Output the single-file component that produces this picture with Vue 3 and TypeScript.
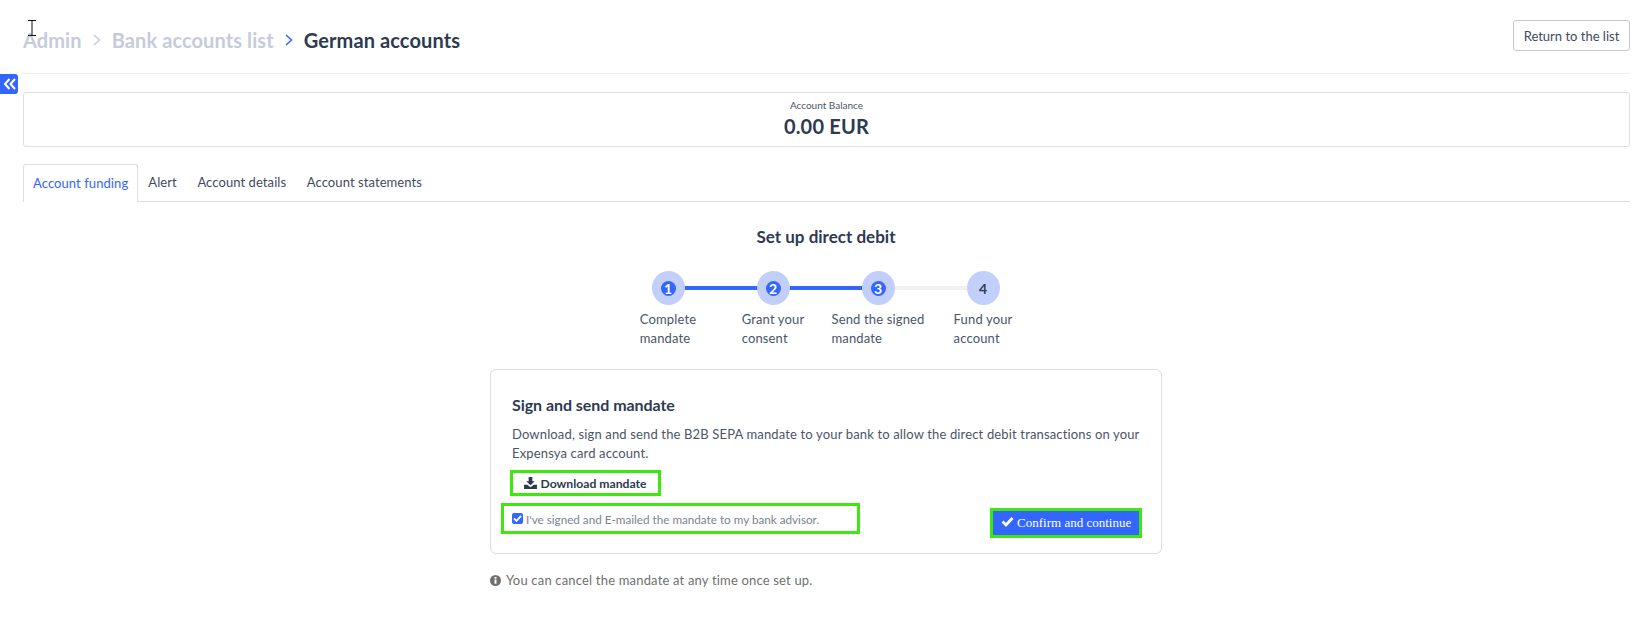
<script setup lang="ts">
const tabs: string[] = ['Alert', 'Account details', 'Account statements']
const steps = [
  { n: '1', label: ['Complete', 'mandate'], done: true },
  { n: '2', label: ['Grant your', 'consent'], done: true },
  { n: '3', label: ['Send the signed', 'mandate'], done: true },
  { n: '4', label: ['Fund your', 'account'], done: false },
]
</script>

<template>
  <div class="page">
    <svg class="ibeam" width="8" height="16" viewBox="0 0 8 16" aria-hidden="true">
      <path d="M0 .5h3M5 .5h3M4 1v14M0 15.5h3M5 15.5h3M3 .5h2M3 15.5h2" stroke="#111" stroke-width="1" fill="none" />
    </svg>
    <button class="collapse" aria-label="Collapse">
      <svg width="14" height="14" viewBox="0 0 14 14"><path d="M6.5 2 2 7l4.500 5M12 2 7.500 7l4.500 5" fill="none" stroke="#fff" stroke-width="2" /></svg>
    </button>

    <header class="top">
      <nav class="crumbs">
        <span class="muted">Admin</span>
        <svg class="chev" width="8" height="12" viewBox="0 0 8 12"><path d="m1 1 5.500 5L1 11" fill="none" stroke="#c6cbdc" stroke-width="1.500" /></svg>
        <span class="muted">Bank accounts list</span>
        <svg class="chev" width="8" height="12" viewBox="0 0 8 12"><path d="m1 1 5.500 5L1 11" fill="none" stroke="#3366ff" stroke-width="1.500" /></svg>
        <span class="current">German accounts</span>
      </nav>
      <button class="return">Return to the list</button>
    </header>

    <section class="balance">
      <div class="bal-label">Account Balance</div>
      <div class="bal-value">0.00 EUR</div>
    </section>

    <div class="tabs">
      <div class="tab active">Account funding</div>
      <div v-for="t in tabs" :key="t" class="tab">{{ t }}</div>
    </div>

    <main class="content">
      <h2 class="title">Set up direct debit</h2>

      <div class="steps">
        <div v-for="(s, i) in steps" :key="s.n" class="step">
          <span class="dot">
            <span class="num" :class="{ done: s.done }">{{ s.n }}</span>
          </span>
          <span v-if="i < 3" class="bar" :class="{ on: i < 2 }"></span>
          <div class="step-label"><div v-for="l in s.label" :key="l">{{ l }}</div></div>
        </div>
      </div>

      <section class="card">
        <h3>Sign and send mandate</h3>
        <p>Download, sign and send the B2B SEPA mandate to your bank to allow the direct debit transactions on your Expensya card account.</p>
        <button class="download">
          <svg width="13" height="12" viewBox="0 0 14 13"><path d="M5 0h4v4.500h2.600L7 9 2.400 4.500H5z" fill="#2d3a52" /><path d="M0 8.500h3.500L7 11l3.500-2.500H14V13H0z" fill="#2d3a52" /></svg>
          Download mandate
        </button>
        <div class="bottom">
          <label class="check">
            <span class="box">
              <svg width="11" height="11" viewBox="0 0 11 11"><path d="m2 5.500 2.500 2.500L9 2.800" fill="none" stroke="#fff" stroke-width="1.800" /></svg>
            </span>
            I've signed and E-mailed the mandate to my bank advisor.
          </label>
          <button class="confirm">
            <svg width="13" height="11" viewBox="0 0 13 11"><path d="m1.500 5.500 3.500 3.500 6.500-7" fill="none" stroke="#fff" stroke-width="2.800" /></svg>
            Confirm and continue
          </button>
        </div>
      </section>

      <div class="note">
        <svg width="11" height="11" viewBox="0 0 11 11"><circle cx="5.500" cy="5.500" r="5.500" fill="#6f6f6f" /><rect x="4.500" y="4.500" width="2" height="4.200" fill="#fff" /><rect x="4.500" y="2" width="2" height="1.700" fill="#fff" /></svg>
        <span>You can cancel the mandate at any time once set up.</span>
      </div>
    </main>
  </div>
</template>

<style scoped>
* { box-sizing: border-box; }
.page {
  position: relative;
  width: 1650px;
  height: 617px;
  overflow: hidden;
  padding: 0 20px 0 23px;
  background: #fff;
  color: #2d3a52;
  font-family: Lato, "Open Sans", sans-serif;
  font-size: 13px;
  letter-spacing: 0.15px;
}
button { font-family: inherit; cursor: pointer; }
.ibeam { position: absolute; left: 28px; top: 20px; }
.collapse {
  position: absolute;
  left: 0;
  top: 74px;
  width: 18px;
  height: 20px;
  padding: 0 0 0 1px;
  border: 0;
  border-radius: 0 3px 3px 0;
  background: #3366ff;
  display: flex;
  align-items: center;
  justify-content: center;
}
.top {
  height: 74px;
  border-bottom: 1px solid #ececec;
  display: flex;
  align-items: flex-start;
  justify-content: space-between;
}
.crumbs {
  display: flex;
  align-items: center;
  height: 30px;
  margin-top: 25px;
  font-size: 20px;
  font-weight: 700;
  letter-spacing: 0.1px;
}
.muted { color: #c6cbdc; }
.current { color: #2d3a52; }
.chev { margin: 0 11px; }
.return {
  margin-top: 20px;
  width: 117px;
  height: 31px;
  padding: 0;
  background: #fff;
  border: 1px solid #c9c9c9;
  border-radius: 3px;
  color: #3f4a5f;
  font-size: 13px;
}
.balance {
  margin-top: 18px;
  height: 55px;
  border: 1px solid #dedede;
  border-radius: 3px;
  text-align: center;
  padding-top: 6px;
}
.bal-label { font-size: 10px; line-height: 12px; color: #4b5568; letter-spacing: 0; }
.bal-value { font-size: 20px; font-weight: 700; line-height: 26px; margin-top: 2px; letter-spacing: 0.2px; }
.tabs {
  margin-top: 17px;
  height: 38px;
  display: flex;
  border-bottom: 1px solid #dedede;
}
.tab {
  height: 38px;
  padding: 0 10.300px;
  line-height: 36px;
  color: #3f4a5f;
  white-space: nowrap;
  letter-spacing: 0.08px;
}
.tab.active {
  color: #3366ff;
  background: #fff;
  border: 1px solid #dedede;
  border-bottom: 0;
  border-radius: 3px 3px 0 0;
  width: 115px;
  padding: 0 9px;
  flex: none;
}
.content {
  display: flex;
  flex-direction: column;
  align-items: center;
  padding-right: 1px;
}
.title {
  margin: 25px 0 0;
  font-size: 17px;
  line-height: 20px;
  font-weight: 700;
  color: #2d3a52;
  letter-spacing: 0;
}
.steps {
  display: flex;
  margin: 24px 1px 0 0;
  width: 420px;
}
.step {
  position: relative;
  flex: 0 0 105px;
  display: flex;
  flex-direction: column;
  align-items: center;
}
.dot {
  position: relative;
  z-index: 1;
  width: 33px;
  height: 34px;
  border-radius: 50%;
  background: #c2cffb;
  display: flex;
  align-items: center;
  justify-content: center;
}
.num {
  width: 15px;
  height: 15px;
  border-radius: 50%;
  font-size: 14px;
  font-weight: 700;
  line-height: 15px;
  text-align: center;
  color: #2d3a52;
  letter-spacing: 0;
}
.num.done { background: #3366ff; color: #fff; }
.bar {
  position: absolute;
  left: 52px;
  width: 105px;
  top: 15px;
  height: 4px;
  background: #f1f1f1;
}
.bar.on { background: #3366ff; }
.step-label {
  margin-top: 5px;
  line-height: 19px;
  color: #4b5568;
  white-space: nowrap;
}
.card {
  margin-top: 21px;
  width: 672px;
  height: 185px;
  border: 1px solid #dedede;
  border-radius: 6px;
  padding: 25px 20px 0 21px;
}
.card h3 {
  margin: 0;
  font-size: 16px;
  line-height: 20px;
  font-weight: 700;
  letter-spacing: -0.05px;
}
.card p {
  margin: 10px 0 0;
  line-height: 19px;
  color: #4b5568;
}
.download {
  display: flex;
  align-items: center;
  justify-content: center;
  gap: 3px;
  margin: 7px 0 0 -2px;
  width: 151px;
  height: 26px;
  padding: 0;
  background: #fff;
  border: 3px solid #3ee80f;
  font-size: 12.200px;
  font-weight: 700;
  color: #2d3a52;
}
.bottom {
  display: flex;
  align-items: flex-start;
  justify-content: space-between;
  margin: 7px -1px 0 -11px;
  height: 35px;
}
.check {
  display: flex;
  align-items: center;
  width: 359px;
  height: 31px;
  border: 3px solid #3ee80f;
  padding-left: 8px;
  font-size: 11.700px;
  letter-spacing: 0;
  color: #7b8291;
}
.box {
  width: 11px;
  height: 11px;
  margin-right: 3px;
  border-radius: 2px;
  background: #3366ff;
  display: flex;
}
.confirm {
  margin-top: 5px;
  width: 152px;
  height: 30px;
  padding: 0;
  background: #3366ff;
  border: 3px solid #3ee80f;
  color: #fff;
  font-family: "Liberation Serif", serif;
  font-size: 13px;
  font-weight: 400;
  white-space: nowrap;
}
.note {
  display: flex;
  align-items: center;
  gap: 5px;
  margin-top: 18px;
  width: 672px;
  color: #6f6f6f;
  line-height: 16px;
  letter-spacing: 0.18px;
}
</style>
